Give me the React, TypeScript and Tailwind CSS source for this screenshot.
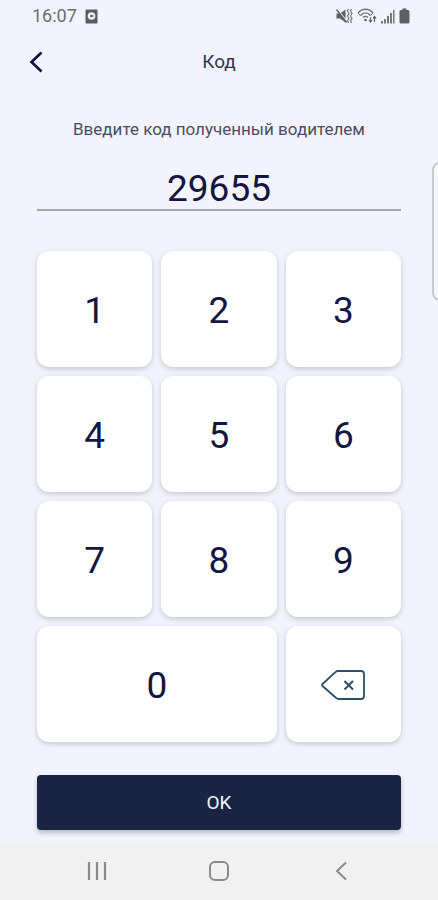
import { useState } from "react";

const DIGITS = ["1", "2", "3", "4", "5", "6", "7", "8", "9"];

const keyClass =
  "flex h-[116px] items-center justify-center rounded-xl bg-white pt-0.5 text-[37px] leading-none shadow-[0_2px_5px_rgba(60,60,60,0.24)] active:bg-gray-50";

function StatusBar() {
  return (
    <div className="flex h-8 items-center justify-between pr-7 pl-8 text-[#6c6d71]">
      <div className="flex items-center gap-2">
        <span className="text-lg leading-8">16:07</span>
        <svg width="13" height="15" viewBox="0 0 13 15" aria-hidden="true">
          <rect x="0.5" y="0.5" width="12" height="14" rx="1" fill="#5b5c60" />
          <circle cx="6.5" cy="7" r="3.8" fill="#f3f4fb" />
          <circle cx="6.5" cy="7" r="1.3" fill="#5b5c60" />
          <path d="M6.5 7h2" stroke="#5b5c60" strokeWidth="1" />
        </svg>
      </div>

      <div className="flex items-center gap-2">
        {/* sound off, vibrate */}
        <svg width="17" height="16" viewBox="0 0 17 16" fill="none" aria-hidden="true">
          <path d="M0.5 5.5H4L9.500 1.5v13L4 10.5H0.5z" fill="#5f6064" />
          <path d="M1.500 1l9.500 12.5" stroke="#f3f4fb" strokeWidth="1.2" />
          <path d="M0.5 1.5l10 13" stroke="#5f6064" strokeWidth="1.4" />
          <path d="M12.500 1l-1 2 1.500 2.500-1.500 2.500 1.500 2.500-1.500 2 1 2.500M15.500 1l-1 2 1.500 2.500-1.500 2.500 1.500 2.500-1.500 2 1 2.500" stroke="#77787c" strokeWidth="1.2" />
        </svg>
        {/* wifi */}
        <svg className="-ml-1" width="20" height="16" viewBox="0 0 20 16" fill="none" aria-hidden="true">
          <path d="M1 5c4-5 11-5 15 0M3.500 7.500c3-3.500 7-3.500 10 0M6 9.500c1.500-1.500 3.500-1.500 5 0" stroke="#737478" strokeWidth="1.400" />
          <path d="M1 5l2.500 2.500M16 5l-2.500 2.500" stroke="#737478" strokeWidth="1" />
          <circle cx="8.500" cy="12" r="1.300" fill="#5f6064" />
          <path d="M13.500 9.500v4M12 12l1.500 2 1.500-2M17.500 14V9M16 10.500l1.500-2 1.500 2" stroke="#5f6064" strokeWidth="1.200" />
        </svg>
        <svg className="-ml-1" width="14" height="15" viewBox="0 0 14 15" fill="#77787c" aria-hidden="true">
          <rect x="0" y="12" width="2" height="2.500" />
          <rect x="3" y="10" width="2" height="4.500" />
          <rect x="6" y="7" width="2" height="7.500" />
          <rect x="9" y="4" width="2" height="10.500" />
          <rect x="12" y="1" width="1.500" height="13.500" />
        </svg>
        <svg className="-ml-1" width="11" height="16" viewBox="0 0 11 16" fill="#5f6064" aria-hidden="true">
          <path d="M3.500 0.500h4v1.500H9a1.500 1.500 0 0 1 1.500 1.500V14a1.500 1.500 0 0 1-1.500 1.500H2A1.500 1.500 0 0 1 0.500 14V3.500A1.500 1.500 0 0 1 2 2h1.500z" />
        </svg>
      </div>
    </div>
  );
}

function Header() {
  return (
    <header className="grid h-15 grid-cols-[1fr_auto_1fr] items-center px-6">
      <button type="button" aria-label="Назад" className="flex size-6 items-center justify-center">
        <svg width="14" height="22" viewBox="0 0 14 22" fill="none" aria-hidden="true">
          <path d="M12.500 1.500L2.500 11l10 9.500" stroke="#0d1038" strokeWidth="2.600" />
        </svg>
      </button>
      <h1 className="text-[19px] leading-6 text-[#33354f]">Код</h1>
    </header>
  );
}

function NavBar() {
  return (
    <nav className="mt-auto grid h-[58px] grid-cols-3 items-center bg-[#f1f1f1] px-9 text-[#8a8a8a]">
      <button type="button" aria-label="Недавние" className="flex h-10 items-center justify-center">
        <svg width="20" height="20" viewBox="0 0 20 20" stroke="currentColor" strokeWidth="2.200" aria-hidden="true">
          <path d="M2 1v18M10 1v18M18 1v18" />
        </svg>
      </button>
      <button type="button" aria-label="Домой" className="flex h-10 items-center justify-center">
        <svg width="20" height="20" viewBox="0 0 20 20" fill="none" stroke="currentColor" strokeWidth="2" aria-hidden="true">
          <rect x="1" y="1" width="18" height="18" rx="5" />
        </svg>
      </button>
      <button type="button" aria-label="Назад" className="flex h-10 items-center justify-center">
        <svg width="12" height="20" viewBox="0 0 12 20" fill="none" stroke="currentColor" strokeWidth="2" aria-hidden="true">
          <path d="M11 1.500L2 10l9 8.500" />
        </svg>
      </button>
    </nav>
  );
}

export default function App() {
  const [code, setCode] = useState("29655");

  const press = (digit: string) => setCode((prev) => prev + digit);

  return (
    <div className="relative flex min-h-screen flex-col overflow-hidden bg-[#f2f3fc] font-[Roboto,sans-serif] text-[#141640]">
      <StatusBar />
      <Header />

      <main className="flex flex-col px-[37px] pb-3">
        <label htmlFor="code" className="mt-[25px] text-center text-[17px] leading-6 text-[#4b4d63]">
          Введите код полученный водителем
        </label>
        <input
          id="code"
          type="text"
          inputMode="numeric"
          value={code}
          onChange={(e) => setCode(e.target.value)}
          className="mt-6 h-[46px] w-full border-b-2 border-[#a5a6ac] bg-transparent pt-1 text-center text-[37px] outline-none"
        />

        <div className="mt-10 grid grid-cols-3 gap-[9px]">
          {DIGITS.map((digit) => (
            <button key={digit} type="button" className={keyClass} onClick={() => press(digit)}>
              {digit}
            </button>
          ))}
          <button type="button" className={`${keyClass} col-span-2`} onClick={() => press("0")}>
            0
          </button>
          <button
            type="button"
            aria-label="Стереть"
            className={keyClass}
            onClick={() => setCode((prev) => prev.slice(0, -1))}
          >
            <svg width="44" height="30" viewBox="0 0 44 30" fill="none" stroke="#2c5068" aria-hidden="true">
              <path
                d="M16.500 1H40a3 3 0 0 1 3 3v22a3 3 0 0 1-3 3H17.500a3 3 0 0 1-2-0.800L1.500 16a1.300 1.300 0 0 1 0-2L15 1.700a3 3 0 0 1 1.500-0.700z"
                strokeWidth="1.800"
              />
              <path d="M23.500 11l8.500 8.500M32 11l-8.500 8.500" strokeWidth="2" />
            </svg>
          </button>
        </div>

        <button
          type="button"
          className="mt-[33px] h-[55px] rounded bg-[#1c2444] pt-0.5 text-[19px] text-[#f3f4fb] shadow-[0_3px_5px_rgba(60,60,60,0.3)]"
        >
          OK
        </button>
      </main>

      {/* edge panel handle */}
      <div className="absolute top-[162px] -right-1.5 h-[139px] w-3 rounded-l-lg border-2 border-[#c9cad0] bg-[#f6f7fc]" />

      <NavBar />
    </div>
  );
}
